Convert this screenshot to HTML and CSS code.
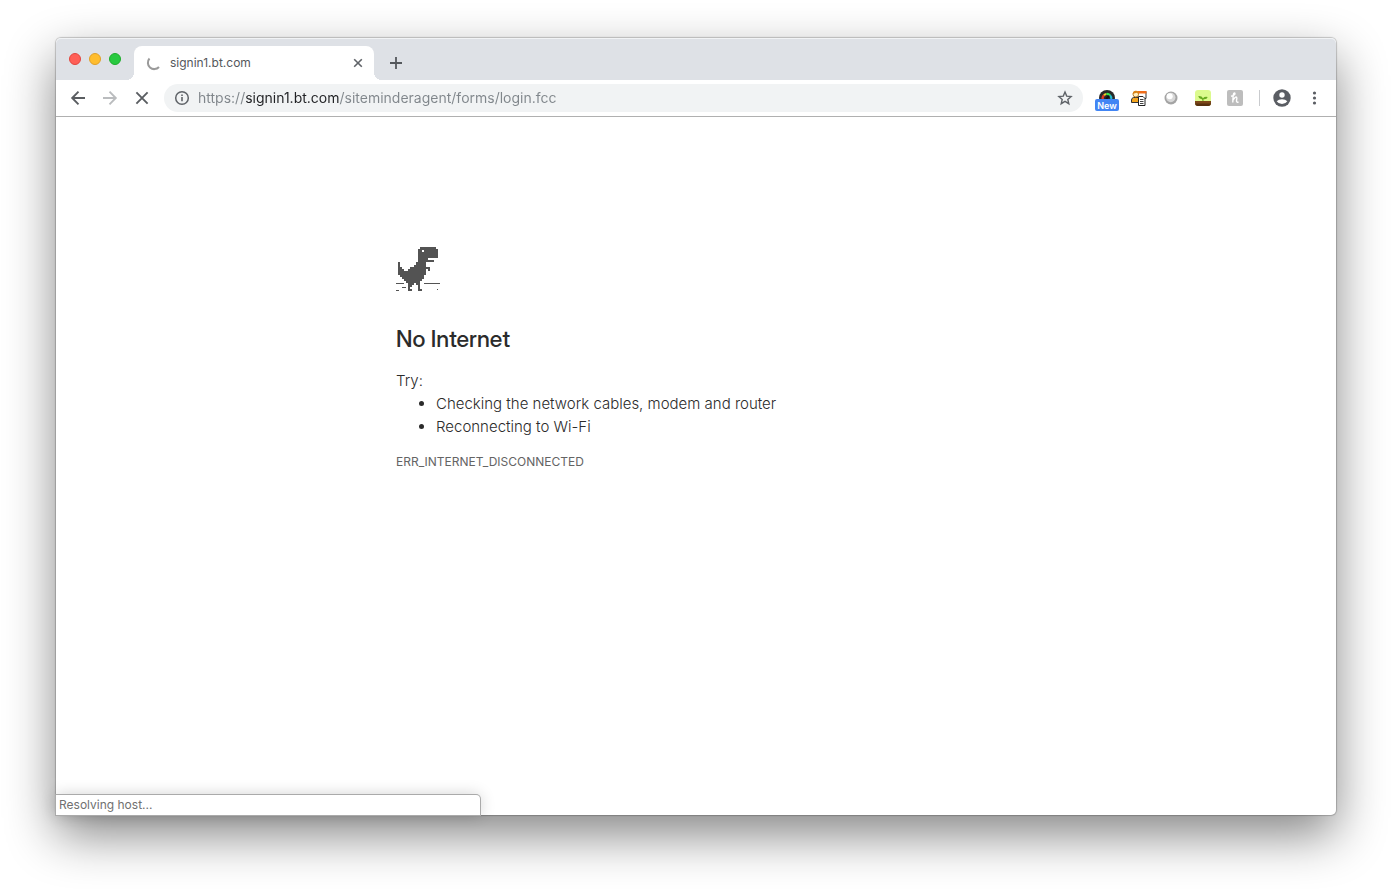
FILE: index.html
```html
<!DOCTYPE html>
<html lang="en">
<head>
    <meta charset="UTF-8">
    <meta name="viewport" content="width=device-width, initial-scale=1.0">
    <title>signin1.bt.com</title>
    <link rel="stylesheet" href="styles.css">
</head>
<body>
    <div class="window">
        <header class="tab-strip">
            <div class="lights">
                <button class="light close" aria-label="Close window"></button>
                <button class="light minimise" aria-label="Minimise window"></button>
                <button class="light maximise" aria-label="Maximise window"></button>
            </div>
            <div class="tab">
                <svg class="spinner" width="16" height="16" viewBox="0 0 16 16" fill="none" stroke="#9a9a9a" stroke-width="2"><path d="M3.500 3.500A6 6 0 1 0 13 12"/></svg>
                <span class="tab-title">signin1.bt.com</span>
                <button class="tab-close" aria-label="Close tab">
                    <svg width="16" height="16" viewBox="0 0 16 16" stroke="#5f6368" stroke-width="1.600"><path d="M4.200 4.200l7.600 7.600M11.800 4.200l-7.600 7.600"/></svg>
                </button>
            </div>
            <button class="new-tab" aria-label="New tab">
                <svg width="16" height="16" viewBox="0 0 16 16" stroke="#54585c" stroke-width="1.800"><path d="M8 2v12M2 8h12"/></svg>
            </button>
        </header>
        <nav class="toolbar">
            <button class="icon-button" aria-label="Back">
                <svg width="20" height="20" viewBox="0 0 20 20" fill="none" stroke="#5a5d61" stroke-width="1.900"><path d="M17 10H4.500M10.500 3.700L4.200 10l6.300 6.300"/></svg>
            </button>
            <button class="icon-button" aria-label="Forward">
                <svg width="20" height="20" viewBox="0 0 20 20" fill="none" stroke="#babcbe" stroke-width="1.900"><path d="M3 10h12.500M9.500 3.700l6.300 6.300-6.300 6.300"/></svg>
            </button>
            <button class="icon-button" aria-label="Stop">
                <svg width="20" height="20" viewBox="0 0 20 20" fill="none" stroke="#5a5d61" stroke-width="1.900"><path d="M4.400 4.400l11.200 11.200M15.600 4.400L4.400 15.600"/></svg>
            </button>
            <div class="address">
                <svg width="16" height="16" viewBox="0 0 16 16" fill="none" stroke="#5f6368" stroke-width="1.500"><circle cx="8" cy="8" r="6.300"/><path d="M8 7v4.300M8 4.400v1.600" stroke-width="1.600"/></svg>
                <input class="url" type="text" aria-label="Address" value="https://signin1.bt.com/siteminderagent/forms/login.fcc">
                <button class="star" aria-label="Bookmark this page">
                    <svg width="16" height="16" viewBox="0 0 16 16" fill="none" stroke="#5f6368" stroke-width="1.400"><path d="M8 2.100l1.700 4 4.400.4-3.300 2.900 1 4.300L8 11.400l-3.800 2.300 1-4.300L1.900 6.500l4.400-.4z"/></svg>
                </button>
            </div>
            <div class="extensions">
                <button class="extension" aria-label="Speed extension">
                    <svg width="16" height="16" viewBox="0 0 16 16"><circle cx="8" cy="8" r="8" fill="#292929"/><g fill="none" stroke-width="2.200"><path d="M4 10A4.300 4.300 0 0 1 5 5.200" stroke="#e53525"/><path d="M5 5.200A4.300 4.300 0 0 1 7.500 4" stroke="#e9cf27"/><path d="M7.500 4A4.300 4.300 0 0 1 11 5.200" stroke="#35e84a"/><path d="M11 5.200A4.300 4.300 0 0 1 12.200 9" stroke="#25b9ce"/></g><path d="M7 9l3-3" stroke="#111" stroke-width="2"/></svg>
                    <span class="badge">New</span>
                </button>
                <button class="extension" aria-label="Contacts extension">
                    <svg width="16" height="16" viewBox="0 0 16 16"><path d="M7 1.500h8v7h-4" fill="#fff" stroke="#333"/><path d="M7 1h8.500v2.500H7z" fill="#ef6c1a"/><path d="M.5 12.500V10Q.5 8 2.500 7.500h5L9 9v3.500z" fill="#f4a51f" stroke="#333"/><circle cx="4.800" cy="4.200" r="2.800" fill="#fff0c4" stroke="#b57a22"/><path d="M1.700 4Q2 .7 5 .7T8 4L5.500 2.700z" fill="#d98316"/><path d="M7.500 6.500H12l2 2v7H7.500z" fill="#fff" stroke="#222"/><path d="M9 9.500h3.500M9 11.500h3.500M9 13.500h3.500" stroke="#444"/></svg>
                </button>
                <button class="extension" aria-label="Sphere extension">
                    <svg width="16" height="16" viewBox="0 0 16 16"><circle cx="8" cy="8" r="6.500" fill="#a4a4a4"/><circle cx="7.800" cy="7.500" r="4.700" fill="#d8d8d8"/><circle cx="6.700" cy="6.300" r="3" fill="#fff"/></svg>
                </button>
                <button class="extension" aria-label="Forest extension">
                    <svg width="16" height="16" viewBox="0 0 16 16"><rect width="16" height="16" rx="3" fill="#dcfa8e"/><path d="M0 11h16v2a3 3 0 0 1-3 3H3a3 3 0 0 1-3-3z" fill="#7c4719"/><path d="M0 13.500h16A3 3 0 0 1 13 16H3a3 3 0 0 1-3-2.500z" fill="#57300f"/><path d="M7.500 11Q7.500 9.500 6.500 9 4 9 3.300 6q3.700-.2 4.700 2.300Q9.500 6.300 12.700 7 12 9.500 8.500 9.200V11z" fill="#68ab20"/></svg>
                </button>
                <button class="extension" aria-label="Honey extension">
                    <svg width="16" height="16" viewBox="0 0 16 16"><rect width="16" height="16" rx="2" fill="#bdbdbd"/><path d="M4 6.300Q8 5.500 8 3.600 7.700 2.300 6.700 3.500 6 5 5.800 12.500M6 10Q8.500 6.300 9.600 7.300 10.200 8 9.500 10.500 9.300 12.800 11.500 12" fill="none" stroke="#fff" stroke-width="1.400"/></svg>
                </button>
            </div>
            <span class="divider"></span>
            <button class="icon-button" aria-label="Profile">
                <svg width="20" height="20" viewBox="0 0 20 20"><circle cx="10" cy="10" r="8.700" fill="#5a5d63"/><circle cx="10" cy="7" r="2.700" fill="#fff"/><path d="M4.700 13.200Q6.500 11.200 10 11.200t5.300 2Q13.500 16 10 16t-5.300-2.800z" fill="#fff"/></svg>
            </button>
            <button class="icon-button" aria-label="Menu">
                <svg width="20" height="20" viewBox="0 0 20 20" fill="#5a5d63"><circle cx="10.500" cy="5" r="1.600"/><circle cx="10.500" cy="10" r="1.600"/><circle cx="10.500" cy="15" r="1.600"/></svg>
            </button>
        </nav>
        <main class="page">
            <div class="message">
                <svg class="dino" width="44" height="46" viewBox="0 0 44 46" fill="#535353" shape-rendering="crispEdges">
                    <!-- head -->
                    <path d="M24 1h16v2H24zM22 3h20v9H22zM22 12h10v2H22zM22 14h16v2H22z"/>
                    <!-- tail, body and arm -->
                    <path d="M2 16h2v5H2zM20 16h10v3H20zM18 19h12v2H18zM2 21h4v2H2zM14 21h20v2H14zM2 23h6v2H2zM12 23h18v2H12zM32 23h2v2h-2zM2 25h28v4H2zM4 29h24v2H4zM6 31h22v2H6zM8 33h18v2H8zM10 35h14v2H10z"/>
                    <!-- legs -->
                    <path d="M12 37h6v2h-2v2h-2v2h2v2h-4zM20 37h4v6h2v2h-4v-6h-2z"/>
                    <path d="M26 4h2v2h-2z" fill="#fff"/>
                    <!-- ground -->
                    <path d="M0 37h8v1H0zM28 37h16v1H28zM6 41h4v1H6zM0 44h3v1H0zM41 43h1v1h-1z"/>
                </svg>
                <h1>No Internet</h1>
                <p>Try:</p>
                <ul>
                    <li>Checking the network cables, modem and router</li>
                    <li>Reconnecting to Wi-Fi</li>
                </ul>
                <div class="error-code">ERR_INTERNET_DISCONNECTED</div>
            </div>
        </main>
        <div class="status">Resolving host...</div>
    </div>
</body>
</html>
```
FILE: styles.css
```css
* {
    box-sizing: border-box;
}
body {
    margin: 0;
    padding: 38px 56px 74px;
    min-height: 100vh;
    display: flex;
    background: #fff;
    font-family: Inter, "Liberation Sans", sans-serif;
    color: #2b2b2b;
}
button {
    padding: 0;
    border: 0;
    background: none;
    font: inherit;
}
svg {
    display: block;
    flex: none;
}
.window {
    position: relative;
    flex: 1;
    min-width: 0;
    display: flex;
    flex-direction: column;
    border-radius: 5px;
    background: #fff;
    box-shadow: 0 0 1px 1px rgba(0, 0, 0, 0.2), 0 20px 50px rgba(0, 0, 0, 0.48);
}
.tab-strip {
    height: 42px;
    display: flex;
    align-items: flex-end;
    background: #dee1e6;
    box-shadow: inset 0 1px #f1f3f5;
    border-radius: 5px 5px 0 0;
}
.lights {
    display: flex;
    align-self: center;
    gap: 8px;
    padding: 0 13px;
}
.light {
    width: 12px;
    height: 12px;
    border: 1px solid;
    border-radius: 50%;
}
.close {
    background: #ff5f57;
    border-color: #e2463f;
}
.minimise {
    background: #ffbd2e;
    border-color: #e0a028;
}
.maximise {
    background: #28c940;
    border-color: #1dad2b;
}
.tab {
    width: 240px;
    height: 34px;
    display: flex;
    align-items: center;
    padding: 0 8px 0 12px;
    background: #fff;
    border-radius: 8px 8px 0 0;
    position: relative;
}
.tab::before,
.tab::after {
    content: "";
    position: absolute;
    bottom: 0;
    width: 8px;
    height: 8px;
}
.tab::before {
    right: 100%;
    background: radial-gradient(circle at 0 0, transparent 8px, #fff 8px);
}
.tab::after {
    left: 100%;
    background: radial-gradient(circle at 100% 0, transparent 8px, #fff 8px);
}
.tab-title {
    flex: 1;
    margin-left: 8px;
    padding-bottom: 2px;
    font-size: 12px;
    color: #54575b;
}
.new-tab {
    margin: 0 14px 9px;
}
.toolbar {
    height: 37px;
    display: flex;
    align-items: center;
    gap: 12px;
    padding: 0 12px;
    border-bottom: 1px solid #b0b0b0;
}
.address {
    flex: 1;
    min-width: 0;
    height: 28px;
    display: flex;
    align-items: center;
    gap: 8px;
    padding: 0 10px;
    border-radius: 14px;
    background: #f1f3f4;
}
.url {
    flex: 1;
    min-width: 0;
    padding: 0 0 2px;
    border: 0;
    outline: 0;
    font: 14px Inter, "Liberation Sans", sans-serif;
    color: transparent;
    /* host name darker than the rest of the address */
    background: linear-gradient(90deg, #80868b 47px, #202124 47px, #202124 142px, #80868b 142px);
    background-clip: text;
    -webkit-background-clip: text;
}
.extensions {
    display: flex;
    gap: 16px;
    padding: 0 4px;
}
.extension {
    position: relative;
}
.badge {
    position: absolute;
    top: 9px;
    left: -4px;
    width: 24px;
    height: 12px;
    border-radius: 2px;
    background: #4285f4;
    color: #fff;
    font-size: 9px;
    font-weight: 600;
    line-height: 14px;
    text-align: center;
}
.divider {
    width: 1px;
    height: 16px;
    background: #c9cbce;
}
.page {
    flex: 1;
    padding: 129px 24px 0;
}
.message {
    max-width: 600px;
    margin: 0 auto;
    font-size: 15px;
    font-weight: 300;
    line-height: 23px;
}
h1 {
    margin: 32px 0 15px;
    font-family: "Inter Display", Inter, "Liberation Sans", sans-serif;
    font-size: 23px;
    font-weight: 500;
    line-height: 30px;
}
p {
    margin: 0;
}
ul {
    margin: 0;
    padding-left: 40px;
}
.error-code {
    margin-top: 12px;
    font-size: 12px;
    font-weight: 400;
    color: #646464;
}
.status {
    position: absolute;
    left: 0;
    bottom: 0;
    width: 424px;
    max-width: 100%;
    height: 20px;
    padding: 0 3px;
    border-radius: 0 4px 0 0;
    background: #fff;
    box-shadow: 0 0 0 1px #aaa, 0 0 16px rgba(0, 0, 0, 0.2);
    font-size: 12px;
    line-height: 20px;
    color: #707070;
}
```
